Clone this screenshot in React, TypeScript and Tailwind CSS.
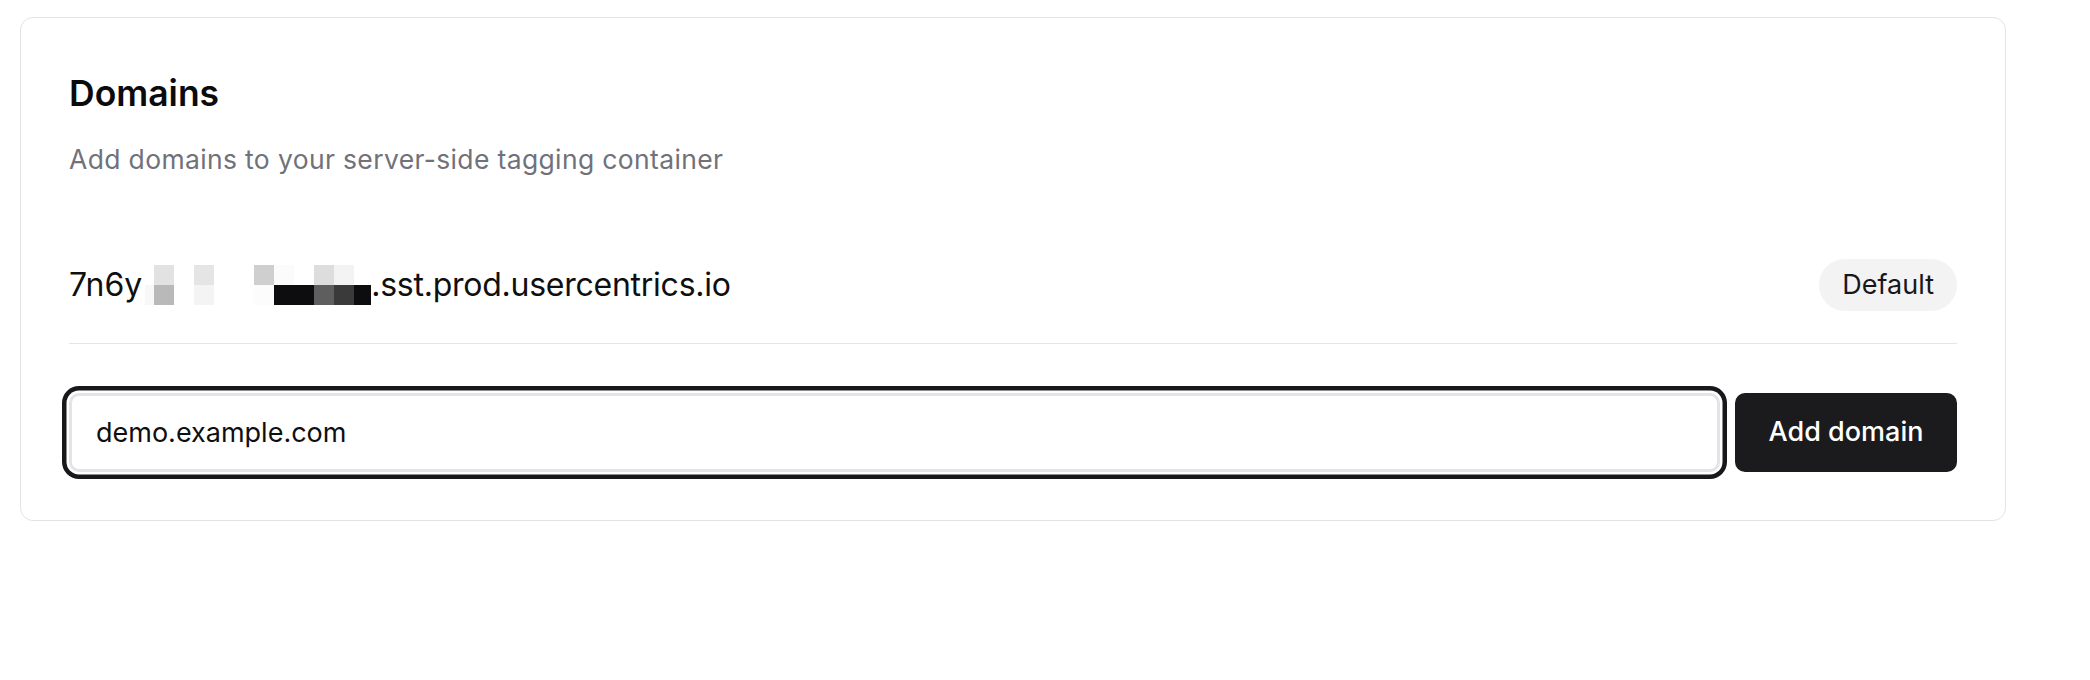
import React from "react";

// pixelated mask over the hidden part of the domain (2 rows x 12 cells)
const TOP = ["#ffffff", "#e2e2e2", "#ffffff", "#e5e5e5", "#ffffff", "#ffffff", "#cfcfcf", "#fbfbfb", "#ffffff", "#dddddd", "#f3f3f3", "#ffffff"];
const BOTTOM = ["#f8f8f8", "#b9b9b9", "#ffffff", "#f4f4f4", "#ffffff", "#ffffff", "#fcfcfc", "#0d0d0f", "#0d0d0f", "#5e5e5e", "#3a3a3a", "#0d0d0f"];
const WIDTHS = [9, 20, 20, 20, 20, 20, 20, 20, 20, 20, 20, 17];

function Mask() {
  return (
    <span className="inline-block overflow-hidden align-[-9px] pl-[3px] h-[40px]">
      <span className="flex flex-col">
        {[TOP, BOTTOM].map((row, r) => (
          <span key={r} className="flex h-[20px]">
            {row.map((c, i) => (
              <span key={i} className="h-[20px] block" style={{ width: WIDTHS[i], background: c }} />
            ))}
          </span>
        ))}
      </span>
    </span>
  );
}

export default function App() {
  return (
    <div className="w-[2090px] h-[680px] bg-white" style={{ fontFamily: "Inter, 'Noto Sans', sans-serif" }}>
      <div className="ml-[20px] mt-[17px] w-[1986px] rounded-[13px] border-[1.5px] border-[#e3e3e5] bg-white px-[48px] pt-[53.5px] pb-[48px]">
        <h2 className="text-[35.5px] leading-[44px] font-semibold text-[#0b0b0c]">Domains</h2>
        <p className="mt-[25.5px] text-[26.5px] leading-[36px] tracking-[0.35px] text-[#71717a]">Add domains to your server-side tagging container</p>

        <div className="mt-[82px] border-b-[1.5px] border-[#e5e5e7] pb-[32px]">
          <div className="flex h-[52px] items-center justify-between">
            <span className="text-[32px] leading-[40px] text-[#0f0f10] whitespace-nowrap">
              7n6y<Mask /><span className="tracking-[-0.25px]">.sst.prod.usercentrics.io</span>
            </span>
            <span className="flex h-[52px] items-center rounded-full bg-[#f3f3f4] px-[23px] text-[27px] text-[#18181b]">Default</span>
          </div>
        </div>

        <div className="mt-[48.5px] flex gap-[15px]">
          <input
            defaultValue="demo.example.com"
            className="h-[79px] flex-1 rounded-[10px] border-[3px] border-[#e4e4e6] bg-white px-[24px] text-[27px] text-[#0f0f10] outline-none ring-[4.5px] ring-[#18181b] ring-offset-[2.5px] ring-offset-white"
          />
          <button className="h-[79px] w-[222px] rounded-[10px] bg-[#1b1b1d] text-[27px] font-medium text-white">Add domain</button>
        </div>
      </div>
    </div>
  );
}
